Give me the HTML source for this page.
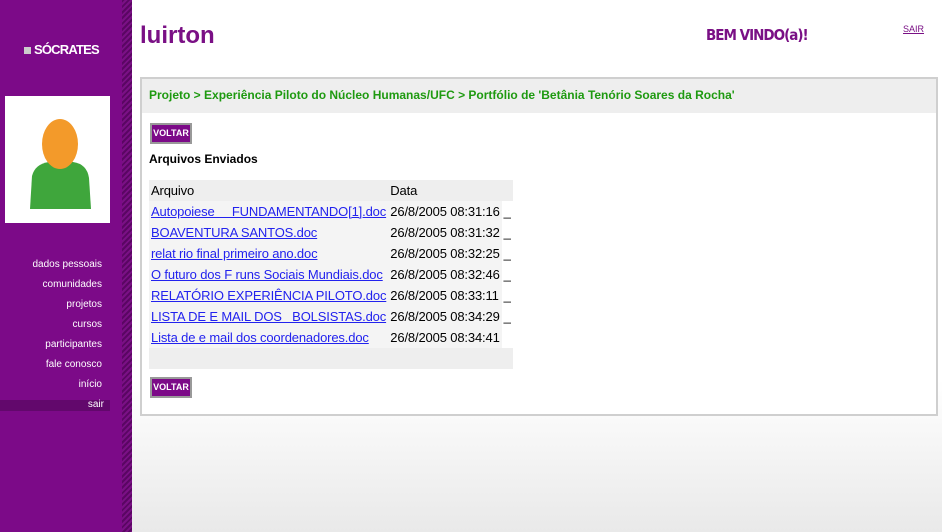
<!DOCTYPE html>
<html><head><style>
*{margin:0;padding:0;box-sizing:border-box}
body{width:942px;height:532px;overflow:hidden;font-family:"Liberation Sans",Arial,sans-serif;background:linear-gradient(#fff 0,#fff 380px,#e9e9e9 532px);position:relative}
#side{position:absolute;left:0;top:0;width:122px;height:532px;background:#7c0a88}
#stripe{position:absolute;left:122px;top:0;width:10px;height:532px;background:repeating-linear-gradient(135deg,#5a0663 0 2px,#7a1085 2px 4px)}
#logo{position:absolute;left:24px;top:42px;color:#fff;font-weight:bold;font-size:13px;letter-spacing:-0.8px}
#logo span{display:inline-block;width:7px;height:7px;background:#ccc;margin-right:3px}
#avatar{position:absolute;left:5px;top:96px;width:105px;height:127px;background:#fff}
#menu{position:absolute;left:0;top:258px;width:108px;text-align:right;color:#fff;font-size:10px}
#menu div{height:20px;line-height:14px;padding-right:6px}
#menu .sel{background:#62086c;height:11px;line-height:10px;width:110px;margin-top:2px}
h1{position:absolute;left:140px;top:22px;font-size:24px;color:#7a1085;font-weight:bold}
#bem{position:absolute;left:706px;top:26px;font-size:15px;font-weight:bold;color:#7a1085;font-family:"DejaVu Sans Condensed","Liberation Sans",sans-serif;letter-spacing:-1px}
#sair{position:absolute;left:903px;top:24px;font-size:9px;color:#7a1085;text-decoration:underline}
#panel{position:absolute;left:140px;top:77px;width:798px;height:339px;border:2px solid #cfcfcf;background:#fff}
#bar{height:34px;background:#eee;color:#1e9a10;font-weight:bold;font-size:12px;padding:9px 0 0 7px}
.btn{position:absolute;left:8px;width:42px;height:21px;background:#7c0a88;border:2px solid #999;color:#fff;font-size:9px;font-weight:bold;text-align:center;line-height:17px}
#tit{position:absolute;left:7px;top:73px;font-weight:bold;font-size:12px}
table{position:absolute;left:7px;top:101px;width:358px;border-collapse:collapse;font-size:13px;letter-spacing:-0.15px}
td{height:21px;padding:0 2px;white-space:nowrap}
tr.h td{background:#eee}
td.a{background:#f4f4f4}
a{color:#2222ee}
td.d{background:#f4f4f4}
</style></head><body>
<div id="side"></div><div id="stripe"></div>
<div id="logo"><span></span>SÓCRATES</div>
<div id="avatar"><svg width="105" height="127" viewBox="0 0 105 127">
<path d="M25 113 L27 80 Q30 68 44 66 L68 66 Q82 68 84 82 L86 113Z" fill="#3fa63c"/>
<ellipse cx="55" cy="48" rx="18" ry="25" fill="#f39a2a"/></svg></div>
<div id="menu"><div>dados pessoais</div><div>comunidades</div><div>projetos</div><div>cursos</div><div>participantes</div><div>fale conosco</div><div>início</div><div class="sel">sair</div></div>
<h1>luirton</h1>
<div id="bem">BEM VINDO(a)!</div>
<div id="sair">SAIR</div>
<div id="panel">
<div id="bar">Projeto &gt; Experiência Piloto do Núcleo Humanas/UFC &gt; Portfólio de 'Betânia Tenório Soares da Rocha'</div>
<div class="btn" style="top:44px">VOLTAR</div>
<div id="tit">Arquivos Enviados</div>
<table>
<tr class="h"><td>Arquivo</td><td>Data</td><td style="width:6px"></td></tr>
<tr><td class="a"><a href="#">Autopoiese &nbsp;&nbsp;&nbsp; FUNDAMENTANDO[1].doc</a></td><td class="d">26/8/2005 08:31:16</td><td>_</td></tr>
<tr><td class="a"><a href="#">BOAVENTURA SANTOS.doc</a></td><td class="d">26/8/2005 08:31:32</td><td>_</td></tr>
<tr><td class="a"><a href="#">relat rio final primeiro ano.doc</a></td><td class="d">26/8/2005 08:32:25</td><td>_</td></tr>
<tr><td class="a"><a href="#">O futuro dos F runs Sociais Mundiais.doc</a></td><td class="d">26/8/2005 08:32:46</td><td>_</td></tr>
<tr><td class="a"><a href="#">RELATÓRIO EXPERIÊNCIA PILOTO.doc</a></td><td class="d">26/8/2005 08:33:11</td><td>_</td></tr>
<tr><td class="a"><a href="#">LISTA DE E MAIL DOS &nbsp; BOLSISTAS.doc</a></td><td class="d">26/8/2005 08:34:29</td><td>_</td></tr>
<tr><td class="a"><a href="#">Lista de e mail dos coordenadores.doc</a></td><td class="d">26/8/2005 08:34:41</td><td></td></tr>
<tr class="h"><td></td><td></td><td></td></tr>
</table>
<div class="btn" style="top:298px">VOLTAR</div>
</div>
</body></html>
